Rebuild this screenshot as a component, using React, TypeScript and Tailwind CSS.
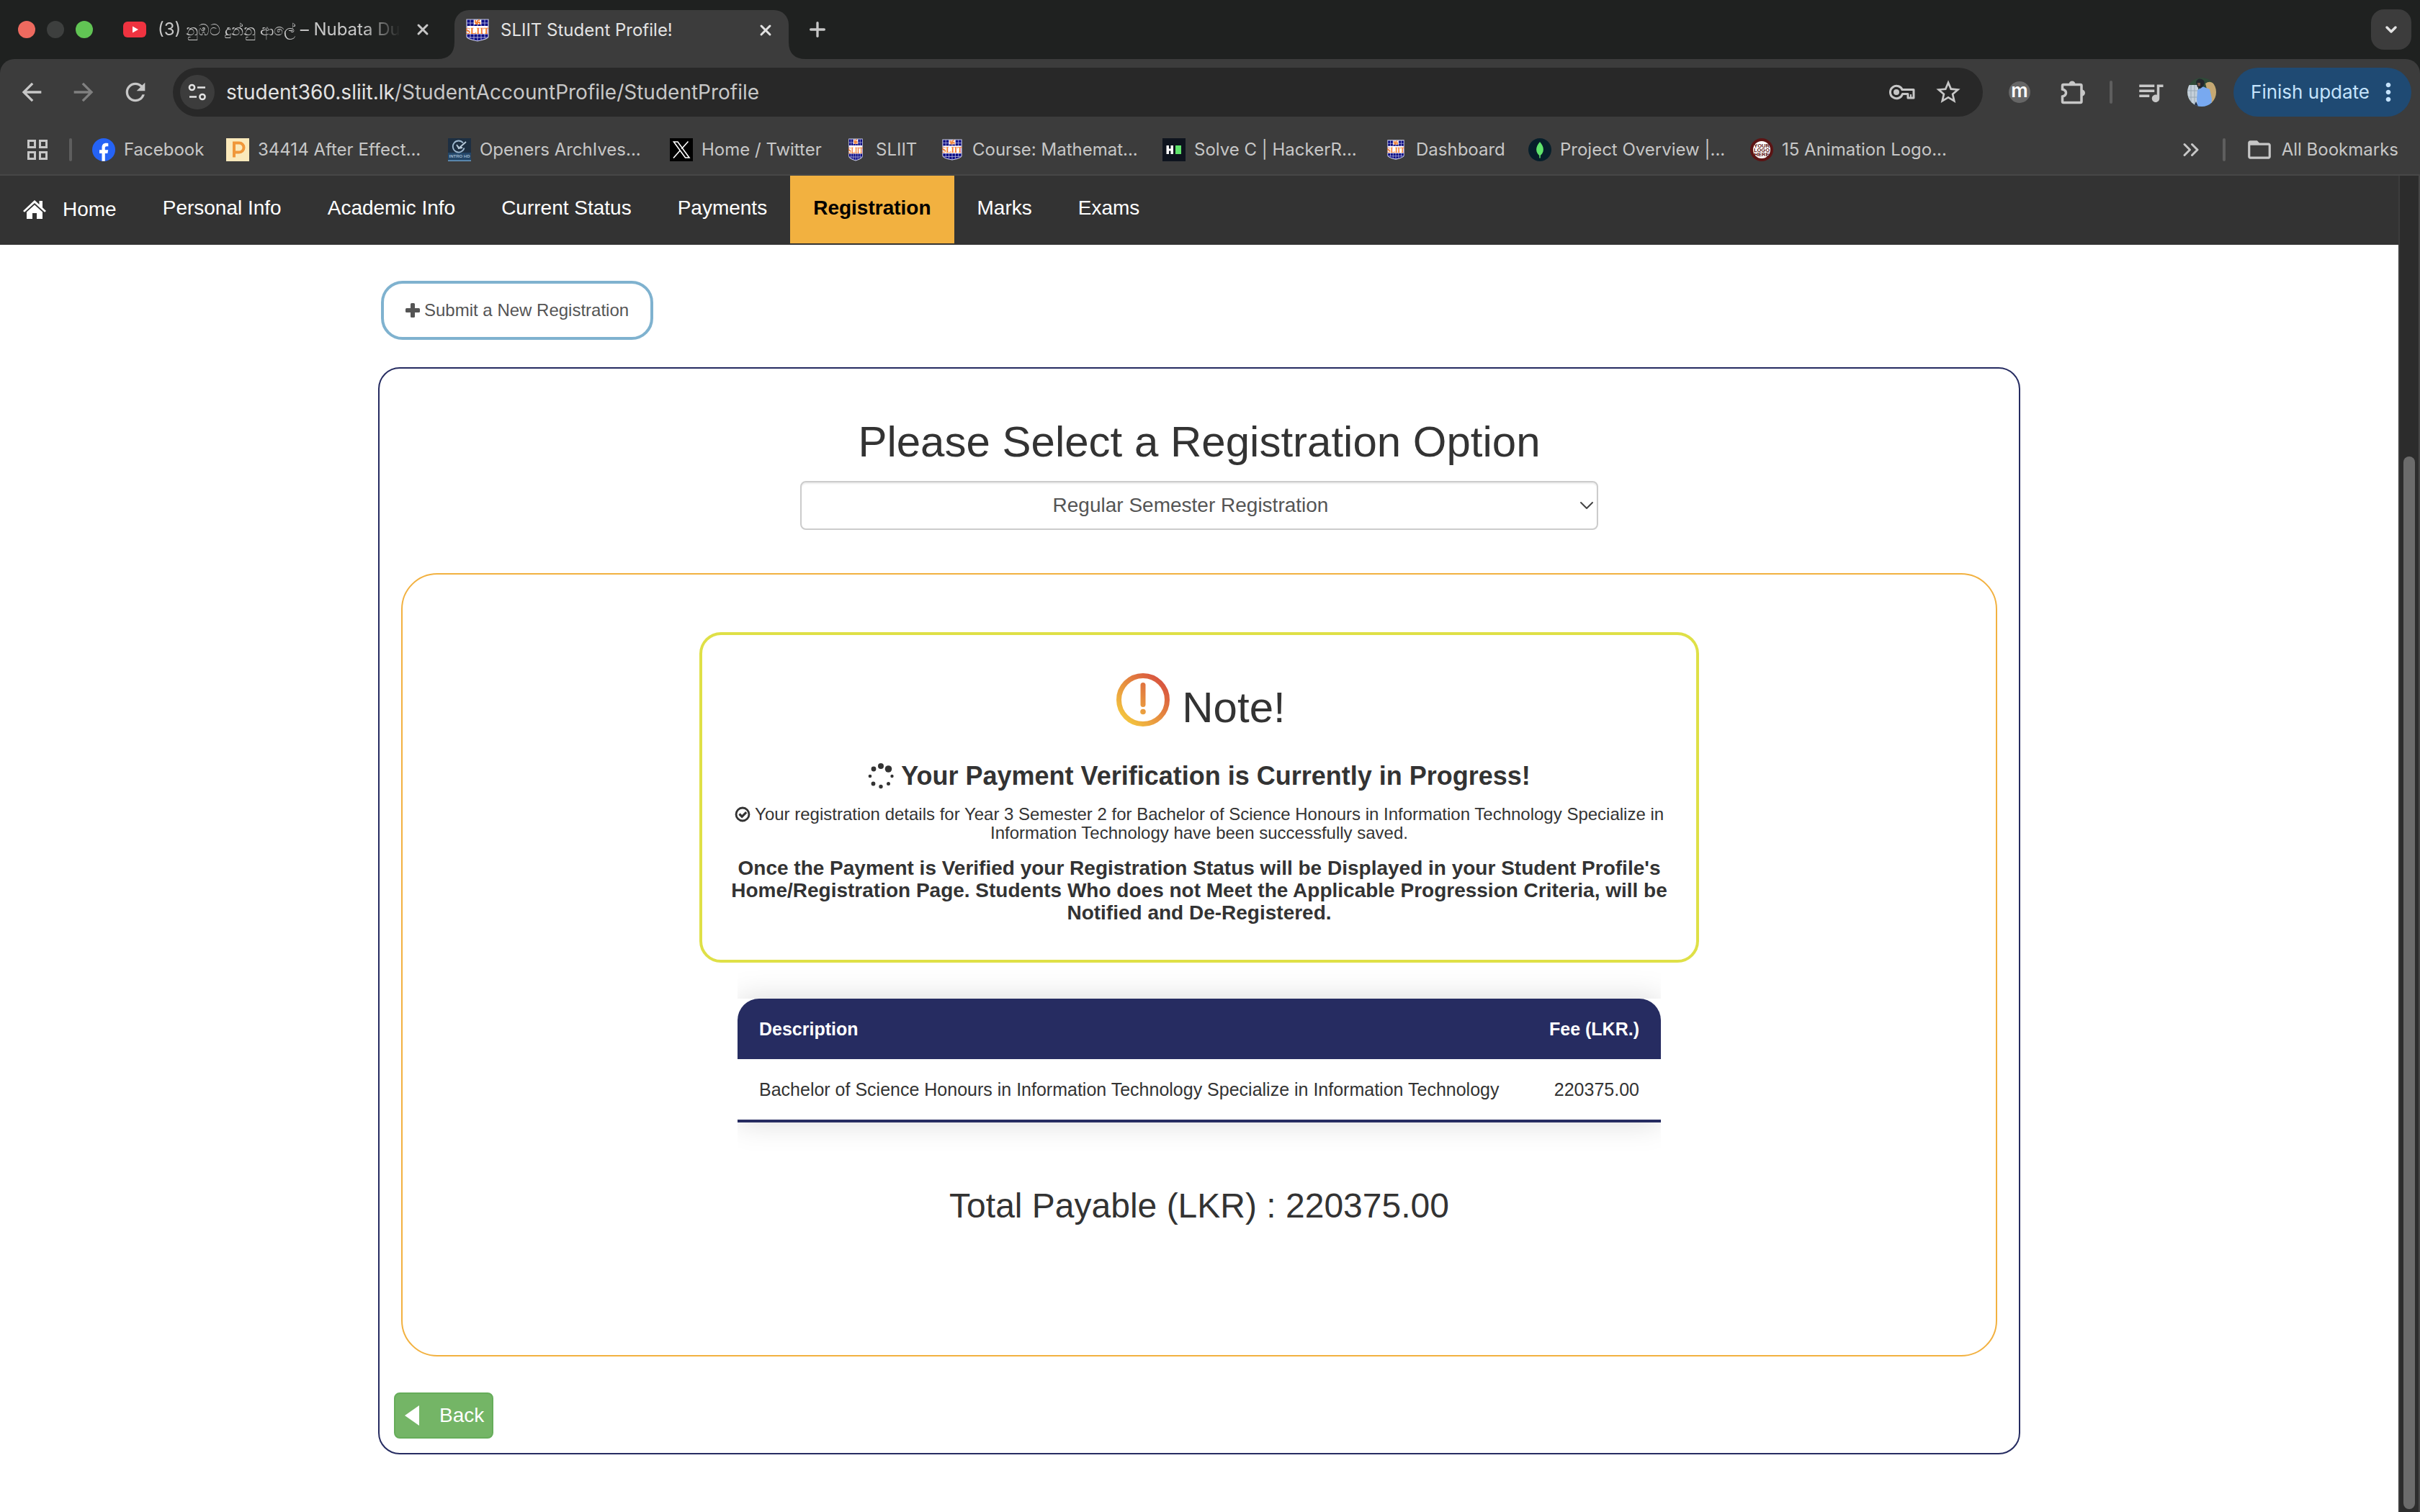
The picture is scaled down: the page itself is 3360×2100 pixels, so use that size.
import type { ReactNode } from "react";
import { ChevronDown, ChevronsRight, Plus, X } from "lucide-react";
import {
  MdArrowBack,
  MdArrowForward,
  MdFolderOpen,
  MdMoreVert,
  MdQueueMusic,
  MdRefresh,
  MdStarBorder,
} from "react-icons/md";

function Shield({ className }: { className: string }) {
  return (
    <svg viewBox="0 0 32 32" className={className} preserveAspectRatio="none" aria-hidden="true">
      <path d="M1 1h30v24q0 3-15 6Q1 28 1 25z" fill="#0b0b85" stroke="#c9cbe6" strokeWidth="1.2" />
      <path d="M6 1v26M11 1v28M16 1v30M21 1v28M26 1v26M1 6h30M1 26h30" stroke="#b9bbe0" strokeWidth="0.9" />
      <rect x="1.5" y="10" width="29" height="11.5" fill="#fff" />
      <rect x="11" y="1.500" width="10" height="6.500" fill="#fff" />
      <path d="M13 2v3h6v3M13 7h3V2M19 2h-2" fill="none" stroke="#f0813a" strokeWidth="1.8" />
      <text x="16" y="20.500" textAnchor="middle" fontSize="12.500" fontWeight="700" fill="#f0772a" fontFamily="Liberation Serif, serif" textRendering="geometricPrecision">
        SLIIT
      </text>
    </svg>
  );
}

function YoutubeIcon() {
  return (
    <svg viewBox="0 0 32 22" className="w-8 h-[22px] shrink-0" aria-hidden="true">
      <rect width="32" height="22" rx="6" fill="#ef3340" />
      <path d="M13 6.500l8 4.500-8 4.500z" fill="#fff" />
    </svg>
  );
}

function FacebookIcon() {
  return (
    <svg viewBox="0 0 32 32" className="size-8" aria-hidden="true">
      <circle cx="16" cy="16" r="16" fill="#2563f5" />
      <path d="M13.500 31.800V21H10v-4.800h3.500V13c0-4.300 2.300-6.300 5.800-6.300 1.300 0 2.500.2 3 .3v4.200h-2.200c-1.800 0-2.300 1-2.300 2.400v2.600h4.400l-.8 4.800h-3.600v10.800z" fill="#fff" />
    </svg>
  );
}

function PIcon() {
  return (
    <svg viewBox="0 0 32 32" className="size-8" aria-hidden="true">
      <rect width="32" height="32" fill="#fbe9bb" />
      <path d="M11 26.500V6.500h7a5.500 5.500 0 0 1 0 13h-7" fill="none" stroke="#f0973a" strokeWidth="4" />
    </svg>
  );
}

function OpenersIcon() {
  return (
    <svg viewBox="0 0 32 32" className="size-8" aria-hidden="true">
      <rect width="32" height="32" fill="#1d2f42" />
      <rect y="20" width="32" height="12" fill="#234668" />
      <rect y="30.500" width="32" height="1.500" fill="#6a9bc4" />
      <path d="M21 6.500a8 8 0 1 0 1.500 7" fill="none" stroke="#9fb9d0" strokeWidth="1.800" />
      <path d="M25 5l-9 8M12 9l3 5 5-1M15 15l-1-4" fill="none" stroke="#b9cbdb" strokeWidth="1.800" />
      <text x="16" y="27" textAnchor="middle" fontSize="6" fontWeight="700" fill="#9fb9d0" fontFamily="Liberation Sans, sans-serif">
        INTRO HD
      </text>
    </svg>
  );
}

function XIcon() {
  return (
    <svg viewBox="0 0 32 32" className="size-8" fill="none" stroke="#fff" strokeWidth="1.600" aria-hidden="true">
      <rect width="32" height="32" fill="#000" stroke="none" />
      <path d="M5.500 5h5.500l16 22h-5.500zM25.500 4.500l-9.200 10.300M13.800 17.500L5 27.500" />
    </svg>
  );
}

function HackerRankIcon() {
  return (
    <svg viewBox="0 0 32 32" className="size-8" aria-hidden="true">
      <rect width="32" height="32" fill="#0e141e" />
      <path d="M5.500 10h3.500v4.500h2.500V10H15v12h-3.500v-4.500H9V22H5.500z" fill="#fff" />
      <rect x="18" y="10" width="8" height="12" fill="#5fe46c" />
    </svg>
  );
}

function MongoIcon() {
  return (
    <svg viewBox="0 0 32 32" className="size-8" aria-hidden="true">
      <circle cx="16" cy="16" r="16" fill="#071f2b" />
      <path d="M16 5c7 8 6 15 0 19.500C10 20 9 13 16 5z" fill="#5fe46c" />
      <path d="M16 24v3.500" stroke="#5fe46c" strokeWidth="1.500" />
    </svg>
  );
}

function LogoHereIcon() {
  return (
    <svg viewBox="0 0 32 32" className="size-8" aria-hidden="true">
      <circle cx="16" cy="16" r="16" fill="#5c1414" />
      <circle cx="16" cy="16" r="12" fill="#fff" />
      <g fontSize="7.500" fontWeight="700" fill="#5c1414" textAnchor="middle" fontFamily="Liberation Sans, sans-serif">
        <text x="16" y="13">YOUR</text>
        <text x="16" y="19">LOGO</text>
        <text x="16" y="25">HERE</text>
      </g>
    </svg>
  );
}

function KeyIcon() {
  return (
    <svg viewBox="0 0 36 22" className="w-9 h-[22px]" aria-hidden="true" fill="none" stroke="#c7c7c7" strokeWidth="3">
      <path d="M18.500 8.500A8.700 8.700 0 1 0 18.500 13.500H26V19h8V7.500H18" strokeLinejoin="round" />
      <path d="M30 19v-5" strokeWidth="2" />
      <circle cx="10" cy="11" r="4" fill="#c7c7c7" stroke="none" />
    </svg>
  );
}

function PuzzleIcon() {
  return (
    <svg viewBox="0 0 34 34" className="size-[34px]" aria-hidden="true">
      <path
        d="M4 6.500h23.500q1.500 0 1.500 1.500v22q0 1.500-1.500 1.500H4q-1.500 0-1.500-1.500v-7c4-1 5-2.500 5-5s-1-4-5-5V8q0-1.500 1.500-1.500z"
        fill="none"
        stroke="#c7c7c7"
        strokeWidth="3.500"
      />
      <path d="M11.500 6a4.500 4.500 0 0 1 9 0zM29.500 13.500a4.500 4.500 0 0 1 0 9z" fill="#c7c7c7" />
    </svg>
  );
}

function SiteInfoIcon() {
  return (
    <svg viewBox="0 0 26 26" className="size-[26px]" fill="none" stroke="#e3e3e3" strokeWidth="2.500" aria-hidden="true">
      <circle cx="5.500" cy="6.500" r="3.600" />
      <path d="M13 6.500h11M2 19.500h10" />
      <circle cx="20" cy="19.500" r="3.600" />
    </svg>
  );
}

function AppsIcon() {
  return (
    <svg viewBox="0 0 28 28" className="size-7" fill="none" stroke="#c7c7c7" strokeWidth="3" aria-hidden="true">
      <path d="M1.500 1.500h9v9h-9zM17.500 1.500h9v9h-9zM1.500 17.500h9v9h-9zM17.500 17.500h9v9h-9z" />
    </svg>
  );
}

function Avatar() {
  return (
    <svg viewBox="0 0 40 40" className="size-10 rounded-full" aria-hidden="true">
      <rect width="40" height="40" fill="#2f4a38" />
      <rect y="10" width="15" height="30" fill="#c5d0da" />
      <path d="M5 10v30M10 10v30M0 18h15M0 27h15" stroke="#97a7b5" strokeWidth="1" />
      <path d="M25 8q8-6 15 4v22q-5 4-8 0z" fill="#c5a873" />
      <path d="M14 17l7-5 10 4 3 13-1 11H14l-1-10z" fill="#78a9f0" />
      <path d="M12 33l3 7H9z" fill="#1d2b44" />
      <path d="M12 6q2-6 8-4t2 10l-4 3-4-2z" fill="#22262c" />
      <path d="M14 7h4v4l-3 1z" fill="#7a5648" />
    </svg>
  );
}

function HouseIcon() {
  return (
    <svg viewBox="0 0 32 28" className="w-8 h-7" fill="currentColor" aria-hidden="true">
      <path d="M16 1L0 16l2 1.800L16 5l14 12.800 2-1.800-5-4.700V2h-4.500v5z" />
      <path d="M16 7.500L5 17.500V27h8v-8h6v8h8v-9.500z" />
    </svg>
  );
}

function PlusIcon() {
  return (
    <svg viewBox="0 0 20 20" className="size-5" fill="currentColor" aria-hidden="true">
      <rect x="7" width="6" height="20" rx="1.500" />
      <rect y="7" width="20" height="6" rx="1.500" />
    </svg>
  );
}

function CheckIcon() {
  return (
    <svg viewBox="0 0 22 22" className="inline size-[22px] align-[-3px]" fill="none" stroke="#333" strokeWidth="2.800" aria-hidden="true">
      <circle cx="11" cy="11" r="9" />
      <path d="M6.500 10.500l3.700 3.700 6-6" strokeWidth="3.200" />
    </svg>
  );
}

function NoteIcon() {
  return (
    <svg viewBox="0 0 76 76" className="size-[76px] self-start" aria-hidden="true">
      <defs>
        <linearGradient id="note-gradient" gradientUnits="userSpaceOnUse" x1="12" y1="66" x2="64" y2="14">
          <stop offset="0" stopColor="#f4c63f" />
          <stop offset="1" stopColor="#d9573f" />
        </linearGradient>
      </defs>
      <circle cx="38" cy="38" r="33.500" fill="none" stroke="url(#note-gradient)" strokeWidth="7" />
      <rect x="34.500" y="14" width="7" height="34" rx="3.500" fill="url(#note-gradient)" />
      <circle cx="38" cy="54.500" r="3.800" fill="url(#note-gradient)" />
    </svg>
  );
}

function SpinnerIcon() {
  return (
    <svg viewBox="0 0 36 36" className="size-9" fill="#333" aria-hidden="true">
      <circle cx="18" cy="4" r="4" />
      <circle cx="28.500" cy="8" r="4.800" />
      <circle cx="33.500" cy="18" r="2.200" />
      <circle cx="28.500" cy="28.500" r="2.500" />
      <circle cx="18" cy="32.500" r="2.700" />
      <circle cx="7.500" cy="28.500" r="2.900" />
      <circle cx="3" cy="18" r="2.300" />
      <circle cx="8" cy="8" r="3.400" />
    </svg>
  );
}

function TabFoot({ flip }: { flip?: boolean }) {
  return (
    <svg viewBox="0 0 24 24" className={flip ? "size-6 self-end -scale-x-100" : "size-6 self-end"} aria-hidden="true">
      <path d="M24 0v24H0Q24 24 24 0z" fill="#3c3c3c" />
    </svg>
  );
}

type Bookmark = { label: string; icon: ReactNode; width: string };

const bookmarks: Bookmark[] = [
  { label: "Facebook", icon: <FacebookIcon />, width: "w-[186px]" },
  { label: "34414 After Effect...", icon: <PIcon />, width: "w-[308px]" },
  { label: "Openers ArchIves...", icon: <OpenersIcon />, width: "w-[308px]" },
  { label: "Home / Twitter", icon: <XIcon />, width: "w-[242px]" },
  { label: "SLIIT", icon: <Shield className="w-5 h-8" />, width: "w-[134px]" },
  { label: "Course: Mathemat...", icon: <Shield className="w-7 h-[30px]" />, width: "w-[308px]" },
  { label: "Solve C | HackerR...", icon: <HackerRankIcon />, width: "w-[308px]" },
  { label: "Dashboard", icon: <Shield className="w-6 h-7" />, width: "w-[200px]" },
  { label: "Project Overview |...", icon: <MongoIcon />, width: "w-[308px]" },
  { label: "15 Animation Logo...", icon: <LogoHereIcon />, width: "w-[308px]" },
];

function TabStrip() {
  return (
    <div className="h-[82px] pl-[25px] pr-3 flex items-center text-2xl leading-8">
      <div className="flex gap-4">
        <span className="size-6 rounded-full bg-[#ee6a5f]" />
        <span className="size-6 rounded-full bg-[#3d3f3e]" />
        <span className="size-6 rounded-full bg-[#61c454]" />
      </div>
      <div className="w-[428px] ml-[42px] flex items-center text-[#c7c7c7]">
        <YoutubeIcon />
        <span className="ml-4 whitespace-nowrap [mask-image:linear-gradient(to_right,black_85%,transparent)]">
          (3) <span className="text-[21px]">නුඹට දුන්නු ආලේ</span> – Nubata Du
        </span>
        <button aria-label="Close tab" className="ml-auto">
          <X className="size-6" strokeWidth={3} />
        </button>
      </div>
      <div className="h-full flex ml-2">
        <TabFoot />
        <div className="w-[464px] mt-[14px] pl-4 pr-5 pb-3 flex items-center rounded-t-[20px] bg-[#3c3c3c] text-[#e3e3e3]">
          <Shield className="size-8" />
          <span className="ml-4 grow">SLIIT Student Profile!</span>
          <button aria-label="Close tab">
            <X className="size-6" strokeWidth={3} />
          </button>
        </div>
        <TabFoot flip />
      </div>
      <button aria-label="New tab" className="text-[#c7c7c7]">
        <Plus className="size-8" strokeWidth={2.5} />
      </button>
      <button aria-label="Search tabs" className="size-14 ml-auto grid place-items-center rounded-[18px] bg-[#3c3c3c] text-[#e3e3e3]">
        <ChevronDown className="size-6" strokeWidth={3.5} />
      </button>
    </div>
  );
}

function Toolbar() {
  return (
    <div className="pt-3 pl-6 pr-3 flex items-center text-[#c7c7c7]">
      <button aria-label="Back"><MdArrowBack className="size-10" /></button>
      <button aria-label="Forward" className="ml-8 text-[#808080]"><MdArrowForward className="size-10" /></button>
      <button aria-label="Reload" className="ml-8"><MdRefresh className="size-10" /></button>
      <div className="h-[68px] grow ml-8 pl-[10px] pr-7 flex items-center rounded-full bg-[#282828]">
        <button aria-label="Site information" className="size-12 grid place-items-center rounded-full bg-[#3c3c3c]">
          <SiteInfoIcon />
        </button>
        <p className="ml-4 grow text-[28px] leading-9">
          <span className="text-[#e3e3e3]">student360.sliit.lk</span>/StudentAccountProfile/StudentProfile
        </p>
        <button aria-label="Passwords"><KeyIcon /></button>
        <button aria-label="Bookmark this tab" className="ml-[26px]"><MdStarBorder className="size-10" /></button>
      </div>
      <button aria-label="Extension" className="size-[30px] ml-9 grid place-items-center rounded-full bg-[#666] text-white text-[26px] leading-6 font-semibold">
        <span className="pb-1">m</span>
      </button>
      <button aria-label="Extensions" className="ml-[42px]"><PuzzleIcon /></button>
      <span className="w-1 h-8 ml-[34px] rounded-full bg-[#5e5e5e]" />
      <button aria-label="Media controls" className="ml-8"><MdQueueMusic className="size-[42px]" /></button>
      <button aria-label="Profile" className="ml-[30px]"><Avatar /></button>
      <button className="h-[68px] ml-6 pl-6 pr-3 flex items-center justify-between gap-[6px] rounded-full bg-[#1f4a73] text-[#c5e3fc] text-[26px] leading-8">
        Finish update
        <MdMoreVert className="size-10" />
      </button>
    </div>
  );
}

function BookmarkBar() {
  return (
    <div className="h-[68px] mt-3 pl-[38px] pr-[30px] flex items-center text-[#c7c7c7] text-2xl leading-8">
      <button aria-label="Apps"><AppsIcon /></button>
      <span className="w-1 h-8 ml-[30px] mr-7 rounded-full bg-[#5e5e5e]" />
      {bookmarks.map((b) => (
        <a key={b.label} href="#" className={`${b.width} flex items-center gap-3 whitespace-nowrap`}>
          <span className="w-8 flex justify-center shrink-0">{b.icon}</span>
          {b.label}
        </a>
      ))}
      <button aria-label="More bookmarks" className="ml-auto"><ChevronsRight className="size-9" strokeWidth={2} /></button>
      <span className="w-1 h-8 ml-[26px] mr-[28px] rounded-full bg-[#5e5e5e]" />
      <button className="flex items-center gap-3">
        <MdFolderOpen className="size-[38px]" />
        All Bookmarks
      </button>
    </div>
  );
}

const sections = ["Personal Info", "Academic Info", "Current Status", "Payments", "Registration", "Marks", "Exams"];

function SiteNav() {
  return (
    <nav className="h-24 pb-[2px] flex bg-[#333] text-white text-[28px] leading-9">
      <a href="#" className="px-8 flex items-center gap-[23px]">
        <HouseIcon />
        Home
      </a>
      {sections.map((name) => (
        <a
          key={name}
          href="#"
          className={
            name === "Registration"
              ? "px-8 pb-1 flex items-center bg-[#f2b140] text-black font-bold"
              : "px-8 pb-1 flex items-center"
          }
        >
          {name}
        </a>
      ))}
    </nav>
  );
}

function NoteCard() {
  return (
    <section className="w-full max-w-[1388px] mx-auto pt-[52px] pb-[50px] px-9 border-4 border-[#dfe047] rounded-[30px] text-center">
      <div className="h-[82px] pl-1 flex justify-center items-end gap-4">
        <NoteIcon />
        <h2 className="text-[60px] leading-[66px]">Note!</h2>
      </div>
      <h3 className="mt-[42px] flex justify-center items-center gap-[10px] text-[36px] leading-10 font-bold">
        <SpinnerIcon />
        Your Payment Verification is Currently in Progress!
      </h3>
      <p className="mt-5 text-2xl leading-[26px]">
        <CheckIcon /> Your registration details for Year 3 Semester 2 for Bachelor of Science Honours in Information
        Technology Specialize in Information Technology have been successfully saved.
      </p>
      <p className="mt-5 text-[28px] leading-[31px] font-bold">
        Once the Payment is Verified your Registration Status will be Displayed in your Student Profile's
        Home/Registration Page. Students Who does not Meet the Applicable Progression Criteria, will be Notified and
        De-Registered.
      </p>
    </section>
  );
}

function FeeTable() {
  return (
    <div className="w-full max-w-[1282px] mx-auto mt-[50px] overflow-x-clip">
      <table className="w-full border-separate border-spacing-0 border-b-4 border-[#262c61] bg-white text-[25px] leading-7 shadow-[0_0_40px_rgba(0,0,0,0.15)]">
        <thead>
          <tr className="h-[84px] text-white">
            <th className="pl-[30px] text-left rounded-tl-[30px] bg-[#262c61]">Description</th>
            <th className="pr-[30px] text-right rounded-tr-[30px] bg-[#262c61]">Fee (LKR.)</th>
          </tr>
        </thead>
        <tbody>
          <tr className="h-[84px]">
            <td className="pl-[30px]">
              Bachelor of Science Honours in Information Technology Specialize in Information Technology
            </td>
            <td className="pr-[30px] text-right">220375.00</td>
          </tr>
        </tbody>
      </table>
    </div>
  );
}

function RegistrationPage() {
  return (
    <main className="w-full max-w-[2280px] mx-auto pt-[50px] text-[#333]">
      <button className="ml-1 h-[82px] px-[30px] flex items-center gap-[6px] border-4 border-[#7fb2cf] rounded-[30px] text-[#555] text-2xl leading-8">
        <PlusIcon />
        Submit a New Registration
      </button>
      <div className="mt-[38px] pt-[69px] pb-5 border-2 border-[#262c61] rounded-[30px]">
        <h1 className="text-center text-[60px] leading-[66px]">
          <label htmlFor="registration-option">Please Select a Registration Option</label>
        </h1>
        <div className="w-full max-w-[1108px] mx-auto mt-[21px] relative">
          <select
            id="registration-option"
            className="block w-full h-[68px] pl-6 pr-12 appearance-none border-2 border-[#ccc] rounded-lg bg-white text-center text-[#555] text-[28px] leading-9 shadow-[inset_0_2px_2px_rgba(0,0,0,0.075)]"
          >
            <option>Regular Semester Registration</option>
          </select>
          <ChevronDown className="absolute right-0 top-[18px] size-8 text-[#444]" strokeWidth={1.5} />
        </div>
        <div className="mx-[30px] mt-[60px] pt-20 pb-[181px] border-2 border-[#f2b140] rounded-[50px]">
          <NoteCard />
          <FeeTable />
          <p className="mt-[89px] text-center text-5xl leading-[53px]">Total Payable (LKR) : 220375.00</p>
        </div>
        <button className="ml-5 mt-[50px] h-16 pl-[13px] pr-[11px] flex items-center gap-7 border-2 border-[#66ad5a] rounded-lg bg-[#74b566] text-white text-[28px] leading-9">
          <svg viewBox="0 0 20 28" className="w-5 h-7" aria-hidden="true">
            <path d="M20 0v28L0 14z" fill="currentColor" />
          </svg>
          Back
        </button>
      </div>
    </main>
  );
}

export default function App() {
  return (
    <div className="min-h-screen flex flex-col bg-[#1f2120] font-['Inter','Noto_Sans',sans-serif]">
      <header>
        <TabStrip />
        <div className="h-[162px] flex flex-col rounded-t-[20px] border-b-2 border-[#474747] bg-[#3c3c3c]">
          <Toolbar />
          <BookmarkBar />
        </div>
      </header>
      <div className="grow flex bg-white font-['Liberation_Sans',sans-serif]">
        <div className="grow min-w-0">
          <SiteNav />
          <RegistrationPage />
        </div>
        <div className="w-[30px] pt-[390px] pb-1 flex justify-center border-l-2 border-r-2 border-l-[#3c3c3c] border-r-[#474747] bg-[#2c2c2c]">
          <div className="w-4 rounded-full bg-[#6b6b6b]" />
        </div>
      </div>
    </div>
  );
}
